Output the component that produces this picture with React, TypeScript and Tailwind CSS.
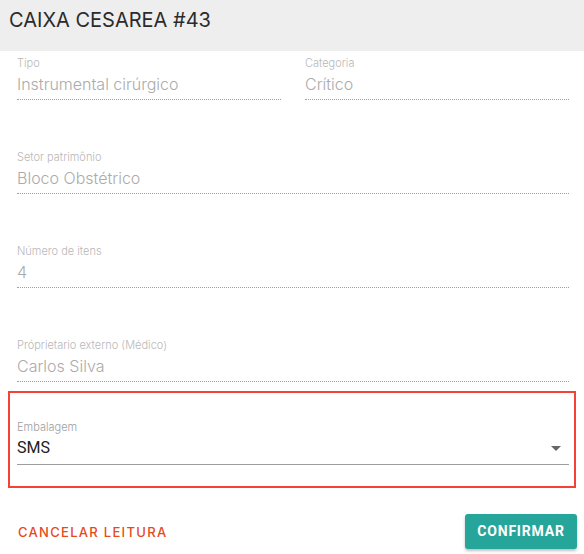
type Field = { label: string; value: string }

function ReadonlyField({ label, value }: Field) {
  return (
    <div>
      <div className="text-[11px] leading-[14px] text-[#b8b8b8] font-light">{label}</div>
      <div className="mt-[2px] h-[28px] text-[16px] leading-[24px] text-[#ababab] font-light border-b border-dotted border-[#9e9e9e]">
        {value}
      </div>
    </div>
  )
}

export default function App() {
  const singles: Field[] = [
    { label: 'Setor patrimônio', value: 'Bloco Obstétrico' },
    { label: 'Número de itens', value: '4' },
    { label: 'Próprietario externo (Médico)', value: 'Carlos Silva' },
  ]

  return (
    <div className="w-[584px] h-[554px] bg-white font-['Inter',sans-serif] overflow-hidden">

      {/* Header */}
      <div className="h-[51px] bg-[#eeeeee] pl-[9px] pt-[6px]">
        <h1 className="text-[20px] leading-[28px] text-[#2b2b2b] font-normal">CAIXA CESAREA #43</h1>
      </div>

      {/* Fields */}
      <div className="pl-[17px] pr-[15px] pt-[5px]">
        <div className="grid grid-cols-2 gap-[24px]">
          <ReadonlyField label="Tipo" value="Instrumental cirúrgico" />
          <ReadonlyField label="Categoria" value="Crítico" />
        </div>
        {singles.map(f => (
          <div key={f.label} className="mt-[50px]">
            <ReadonlyField label={f.label} value={f.value} />
          </div>
        ))}
      </div>

      {/* Embalagem (highlighted) */}
      <div className="mt-[9px] ml-[8px] w-[568px] border-2 border-[#f44336] pl-[7px] pr-[5px] pt-[27px] pb-[21px]">
        <div className="text-[11px] leading-[14px] text-[#9e9e9e] font-light">Embalagem</div>
        <div className="mt-[2px] h-[29px] flex items-start justify-between border-b border-[#9e9e9e]">
          <span className="font-['Roboto',sans-serif] text-[16px] leading-[24px] text-[#212121]">SMS</span>
          <svg width="10" height="5" viewBox="0 0 10 5" className="mt-[10px] mr-[8px]">
            <path d="M0 0 L10 0 L5 5 Z" fill="#666666" />
          </svg>
        </div>
      </div>

      {/* Actions */}
      <div className="mt-[26px] pl-[18px] pr-[7px] flex items-center justify-between">
        <button className="text-[13px] leading-[20px] tracking-[1.3px] font-medium text-[#e64a19]">
          CANCELAR LEITURA
        </button>
        <button className="h-[35px] w-[112px] rounded-[3px] bg-[#26a69a] text-white font-['Roboto',sans-serif] font-bold text-[14px] tracking-[0.8px] shadow-[0_2px_3px_rgba(0,0,0,0.25)]">
          CONFIRMAR
        </button>
      </div>
    </div>
  )
}
